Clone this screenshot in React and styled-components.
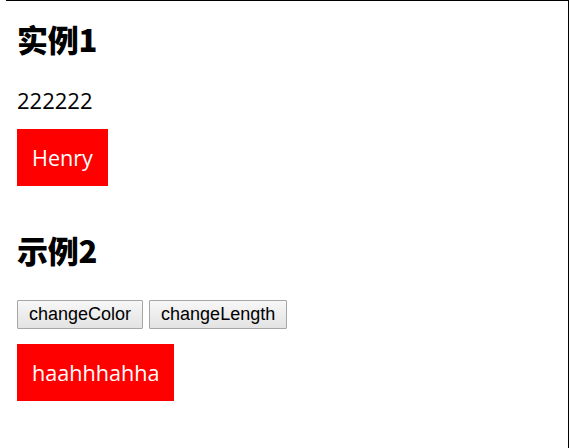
import React, { useState } from "react";
import styled, { createGlobalStyle } from "styled-components";

const Global = createGlobalStyle`
  html, body { margin: 0; padding: 0; background: #fff; }
  body { font-family: "Open Sans", "Noto Sans", sans-serif; color: #000; }
`;

const Frame = styled.div`
  margin-left: 6px;
  width: 551px;
  height: 447px;
  border-top: 1px solid #000;
  border-right: 1px solid #000;
  padding-left: 11px;
  box-sizing: content-box;
  overflow: hidden;
`;

const Heading = styled.h1`
  margin: ${(p) => p.$top}px 0 0;
  font-family: "Noto Sans CJK SC", "Liberation Sans", sans-serif;
  font-weight: 900;
  font-size: 31px;
  line-height: 40px;
  letter-spacing: -0.3px;
`;

const Text = styled.p`
  margin: 26px 0 0;
  font-size: 22px;
  line-height: 30px;
`;

const Tag = styled.div`
  display: inline-block;
  margin-top: ${(p) => p.$top}px;
  padding: 14px 15px;
  background: #ff0000;
  color: #fff;
  font-size: 21.6px;
  line-height: 29px;
`;

const Block = styled.div`
  display: flex;
`;

const Buttons = styled.div`
  display: flex;
  gap: 6px;
  margin-top: 30px;
`;

const Button = styled.button`
  font-family: "Liberation Sans", Arial, sans-serif;
  font-size: 18px;
  line-height: 21px;
  height: 29px;
  padding: 3px 11px;
  border: 1px solid #a6a6a6;
  border-radius: 1px;
  color: #000;
  background: linear-gradient(#f7f7f7, #e3e3e3);
  cursor: pointer;
`;

export default function App() {
  const [long, setLong] = useState(false);
  const [red, setRed] = useState(true);
  return (
    <>
      <Global />
      <Frame>
        <Heading $top={18}>实例1</Heading>
        <Text>222222</Text>
        <Block>
          <Tag $top={14}>Henry</Tag>
        </Block>
        <Heading $top={44}>示例2</Heading>
        <Buttons>
          <Button onClick={() => setRed(!red)}>changeColor</Button>
          <Button onClick={() => setLong(!long)}>changeLength</Button>
        </Buttons>
        <Block>
          <Tag $top={15}>haahhhahha</Tag>
        </Block>
      </Frame>
    </>
  );
}
